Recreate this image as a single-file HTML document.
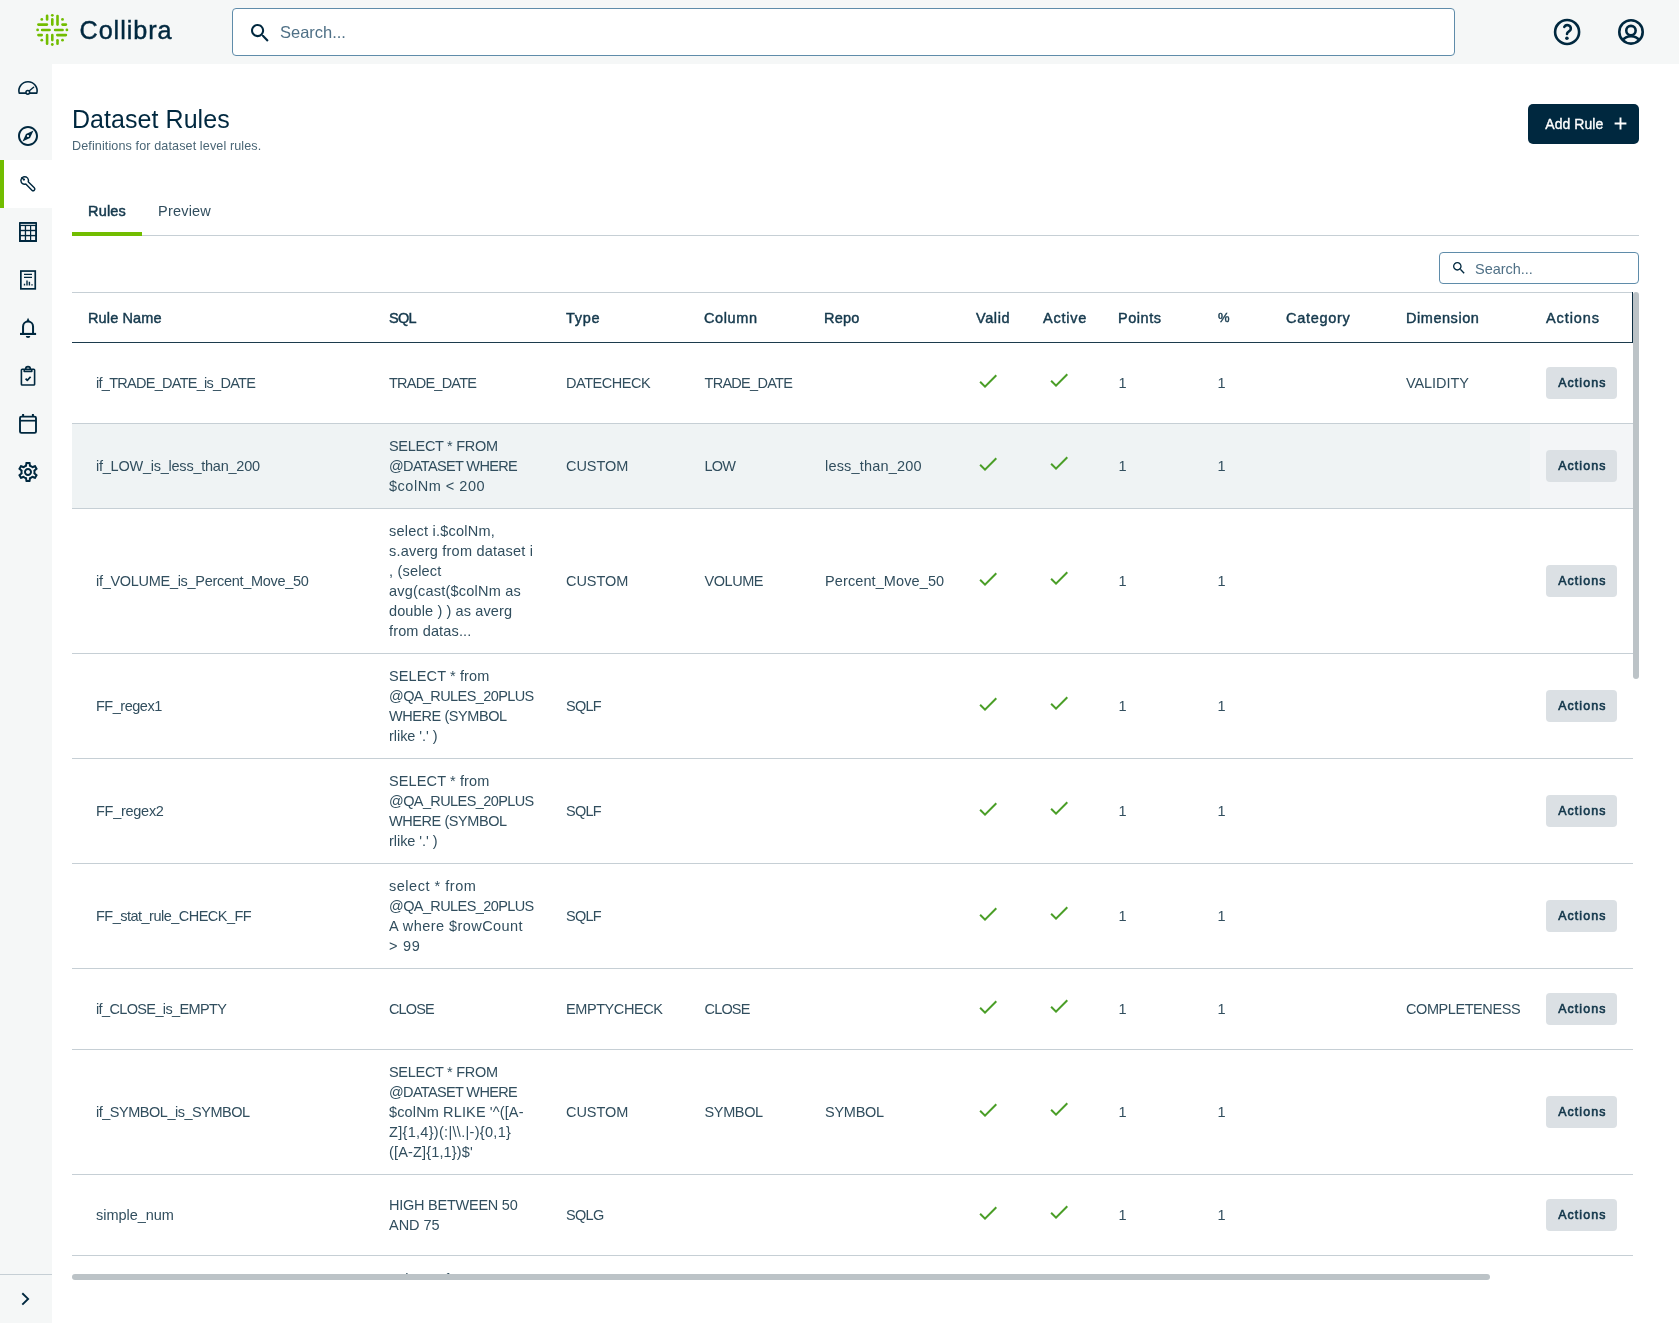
<!DOCTYPE html>
<html><head><meta charset="utf-8"><title>Dataset Rules</title>
<style>
html,body{margin:0;padding:0}
body{width:1679px;height:1323px;overflow:hidden;position:relative;background:#fff;font-family:"Liberation Sans",sans-serif;-webkit-font-smoothing:antialiased}
</style></head><body>
<div style="position:absolute;left:0px;top:0px;width:1679px;height:64px;background:#f5f7f7;"></div>
<div style="position:absolute;left:0px;top:64px;width:52px;height:1259px;background:#f5f7f7;"></div>
<div style="position:absolute;left:0px;top:160px;width:52px;height:48px;background:#fff;"></div>
<div style="position:absolute;left:0px;top:160px;width:4px;height:48px;background:#72bd00;"></div>
<div style="position:absolute;left:0px;top:1274px;width:52px;height:1px;background:#c6cfd5;"></div>
<svg style="position:absolute;left:32px;top:10px" width="40" height="40" viewBox="32 10 40 40" fill="none" stroke="#72bd00" stroke-width="2.6" stroke-linecap="round"><path d="M47.1 15.8L47.1 19.4"/><circle cx="52.3" cy="15.3" r="1.4" stroke="none" fill="#72bd00"/><path d="M52.3 19.3L52.3 24.6"/><path d="M57.5 16.1L57.5 24.6"/><path d="M47.1 35.0L47.1 43.8"/><path d="M52.3 35.0L52.3 40.1"/><circle cx="52.3" cy="44.5" r="1.4" stroke="none" fill="#72bd00"/><path d="M57.5 40.2L57.5 43.8"/><path d="M38.4 24.6L46.9 24.6"/><path d="M62.5 24.6L65.9 24.6"/><circle cx="37.6" cy="29.95" r="1.4" stroke="none" fill="#72bd00"/><path d="M42.1 29.95L49.6 29.95"/><path d="M55.1 29.95L62.6 29.95"/><circle cx="66.9" cy="29.95" r="1.4" stroke="none" fill="#72bd00"/><path d="M38.4 35.1L41.7 35.1"/><path d="M57.3 35.1L65.9 35.1"/><circle cx="41.8" cy="19.4" r="1.4" stroke="none" fill="#72bd00"/><circle cx="62.5" cy="19.4" r="1.4" stroke="none" fill="#72bd00"/><circle cx="41.8" cy="40.2" r="1.4" stroke="none" fill="#72bd00"/><circle cx="62.5" cy="40.2" r="1.4" stroke="none" fill="#72bd00"/></svg>
<div style="position:absolute;left:232px;top:8px;width:1221px;height:46px;background:#fff;border:1px solid #5f8caa;border-radius:4px"></div>
<svg style="position:absolute;left:248.2px;top:20.7px" width="24.2" height="24.2" viewBox="0 0 24 24" fill="#00283f" ><path d="M15.5 14h-.79l-.28-.27C15.41 12.59 16 11.11 16 9.5 16 5.91 13.09 3 9.5 3S3 5.91 3 9.5 5.91 16 9.5 16c1.61 0 3.09-.59 4.23-1.57l.27.28v.79l5 4.99L20.49 19l-4.99-5zm-6 0C7.01 14 5 11.99 5 9.5S7.01 5 9.5 5 14 7.01 14 9.5 11.99 14 9.5 14z"/></svg>
<svg style="position:absolute;left:1551px;top:16px" width="32" height="32" viewBox="1551 16 32 32" fill="none" stroke="#00283f" stroke-width="2.6" stroke-linecap="round" stroke-linejoin="round"><circle cx="1567.1" cy="31.95" r="12"/><path d="M1564.3 26.9A3.5 3.5 0 0 1 1570.8 28.9C1570.8 31.4 1567 31.2 1567 33.9" stroke-width="2.6"/><circle cx="1566.9" cy="38.25" r="1.8" fill="#00283f" stroke="none"/></svg>
<svg style="position:absolute;left:1615px;top:16px" width="32" height="32" viewBox="1615 16 32 32" fill="none" stroke="#00283f" stroke-width="2.6"><circle cx="1631" cy="31.9" r="11.7"/><circle cx="1630.95" cy="30.6" r="4.7"/><path d="M1622.2 40.6C1624.4 37.7 1627.4 36.3 1631 36.3S1637.6 37.7 1639.8 40.6" stroke-width="2.5"/></svg>
<svg style="position:absolute;left:16px;top:76px" width="24" height="24" viewBox="16 76 24 24" fill="none" stroke="#00283f" stroke-width="1.6" stroke-linejoin="round"><path d="M19.2 93.1A9.1 9.1 0 1 1 36.8 93.1Z"/><path d="M28.8 91.2L33.6 87.2" stroke-linecap="round" stroke-width="1.45"/><circle cx="27.8" cy="92.3" r="1.85" stroke-width="1.5" fill="#f5f7f7"/></svg>
<svg style="position:absolute;left:16px;top:124px" width="24" height="24" viewBox="0 0 24 24" fill="#00283f" ><path d="M12 2C6.48 2 2 6.48 2 12s4.48 10 10 10 10-4.48 10-10S17.52 2 12 2zm0 18c-4.41 0-8-3.590-8-8s3.590-8 8-8 8 3.590 8 8-3.590 8-8 8zm-5.500-2.500l7.510-3.490L17.500 6.500 9.990 9.990 6.500 17.500zm5.500-6.600c.610 0 1.100.490 1.100 1.100s-.490 1.100-1.100 1.100-1.100-.490-1.100-1.100.490-1.100 1.100-1.100z"/></svg>
<svg style="position:absolute;left:16px;top:172px" width="24" height="24" viewBox="16 172 24 24" fill="none" stroke-linecap="round"><circle cx="24.7" cy="180.6" r="4.5" fill="#00283f"/><path d="M25.5 181.4L33.1 189.0" stroke="#00283f" stroke-width="4.8"/><circle cx="24.7" cy="180.6" r="3" fill="#fff"/><path d="M25.5 181.4L33.1 189.0" stroke="#fff" stroke-width="1.9"/><circle cx="23.9" cy="179.6" r="1.15" fill="#00283f"/><path d="M21.8 177.7L23.6 179.4" stroke="#00283f" stroke-width="1.3"/></svg>
<svg style="position:absolute;left:16px;top:220px" width="24" height="24" viewBox="16 220 24 24"><rect x="19" y="222" width="18" height="20" rx="0.5" fill="#00283f"/><rect x="20.6" y="223.9" width="14.8" height="0.9" fill="#f5f7f7"/><rect x="20.9" y="226.1" width="3.9" height="3.7" fill="#f5f7f7"/><rect x="20.9" y="231.2" width="3.9" height="3.7" fill="#f5f7f7"/><rect x="20.9" y="236.3" width="3.9" height="3.7" fill="#f5f7f7"/><rect x="26.1" y="226.1" width="3.9" height="3.7" fill="#f5f7f7"/><rect x="26.1" y="231.2" width="3.9" height="3.7" fill="#f5f7f7"/><rect x="26.1" y="236.3" width="3.9" height="3.7" fill="#f5f7f7"/><rect x="31.2" y="226.1" width="3.9" height="3.7" fill="#f5f7f7"/><rect x="31.2" y="231.2" width="3.9" height="3.7" fill="#f5f7f7"/><rect x="31.2" y="236.3" width="3.9" height="3.7" fill="#f5f7f7"/></svg>
<svg style="position:absolute;left:16px;top:268px" width="24" height="24" viewBox="16 268 24 24" fill="none" stroke="#00283f"><rect x="20.85" y="271.05" width="14.4" height="17.8" stroke-width="1.7"/><path d="M24 274.4H32M24 277.4H32" stroke-width="1.3"/><path d="M24.5 283.8V285.6M27 280.5V285.6M29.4 281.8V285.6M32 284.3V285.6" stroke-width="1.4"/></svg>
<svg style="position:absolute;left:16px;top:316px" width="24" height="24" viewBox="16 316 24 24" fill="none" stroke="#00283f" stroke-width="2"><path d="M23.05 333.9V326.6A5 5 0 0 1 33.05 326.6V333.9"/><path d="M20 333.95H36.1" stroke-width="2.1"/><path d="M26.5 320.9L28.05 317.7L29.6 320.9Z" fill="#00283f" stroke="none"/><path d="M25.8 336H30.3A2.25 2.1 0 0 1 25.8 336Z" fill="#00283f" stroke="none"/></svg>
<svg style="position:absolute;left:16px;top:364px" width="24" height="24" viewBox="16 364 24 24" fill="none" stroke="#00283f" stroke-width="1.6" stroke-linejoin="round"><rect x="21.4" y="369.2" width="13.2" height="15.8" rx="0.8"/><path d="M24.2 369.3V371.4H31.8V369.3"/><path d="M25.6 369.2A2.4 2.6 0 0 1 30.4 369.2" /><path d="M25.6 378.7L27.3 380.4L30.6 376.7" stroke-width="1.7"/></svg>
<svg style="position:absolute;left:16px;top:412px" width="24" height="24" viewBox="16 412 24 24" fill="none" stroke="#00283f" stroke-width="1.9"><rect x="20" y="416.6" width="16" height="16.3" rx="1.4"/><path d="M20 420.7H36" stroke-width="1.7"/><path d="M23.1 414V417M32.9 414V417" stroke-width="2"/></svg>
<svg style="position:absolute;left:16px;top:460px" width="24" height="24" viewBox="0 0 24 24" fill="#00283f" ><path d="M19.43 12.98c.04-.32.07-.64.07-.98 0-.34-.03-.66-.07-.98l2.11-1.65c.19-.15.24-.42.12-.64l-2-3.46c-.09-.16-.26-.25-.44-.25-.06 0-.12.01-.17.03l-2.49 1c-.52-.4-1.08-.73-1.69-.98l-.38-2.65C14.46 2.18 14.25 2 14 2h-4c-.25 0-.46.18-.49.42l-.38 2.65c-.61.25-1.17.59-1.69.98l-2.49-1c-.06-.02-.12-.03-.18-.03-.17 0-.34.09-.43.25l-2 3.46c-.13.22-.07.49.12.64l2.11 1.65c-.04.32-.07.65-.07.98 0 .33.03.66.07.98l-2.11 1.65c-.19.15-.24.42-.12.64l2 3.46c.09.16.26.25.44.25.06 0 .12-.01.17-.03l2.49-1c.52.4 1.08.73 1.69.98l.38 2.65c.03.24.24.42.49.42h4c.25 0 .46-.18.49-.42l.38-2.65c.61-.25 1.17-.59 1.69-.98l2.49 1c.06.02.12.03.18.03.17 0 .34-.09.43-.25l2-3.46c.12-.22.07-.49-.12-.64l-2.11-1.65zm-1.98-1.71c.04.31.05.52.05.73 0 .21-.02.43-.05.73l-.14 1.13.89.7 1.08.84-.7 1.21-1.27-.51-1.04-.42-.9.68c-.43.32-.84.56-1.25.73l-1.06.43-.16 1.13-.2 1.35h-1.4l-.19-1.35-.16-1.13-1.06-.43c-.43-.18-.83-.41-1.23-.71l-.91-.7-1.06.43-1.27.51-.7-1.21 1.08-.84.89-.7-.14-1.13c-.03-.31-.05-.54-.05-.74s.02-.43.05-.73l.14-1.13-.89-.7-1.08-.84.7-1.21 1.27.51 1.04.42.9-.68c.43-.32.84-.56 1.25-.73l1.06-.43.16-1.13.2-1.35h1.39l.19 1.35.16 1.13 1.06.43c.43.18.83.41 1.23.71l.91.7 1.06-.43 1.27-.51.7 1.21-1.07.85-.89.7.14 1.13zM12 8c-2.21 0-4 1.79-4 4s1.79 4 4 4 4-1.79 4-4-1.79-4-4-4zm0 6c-1.1 0-2-.9-2-2s.9-2 2-2 2 .9 2 2-.9 2-2 2z"/></svg>
<svg style="position:absolute;left:13px;top:1287px" width="24" height="24" viewBox="13 1287 24 24" fill="none" stroke="#00283f" stroke-width="1.9"><path d="M22.3 1293.2L28.1 1298.9L22.3 1304.6"/></svg>
<div style="position:absolute;left:1528px;top:104px;width:111px;height:40px;background:#00283f;border-radius:5px"></div>
<svg style="position:absolute;left:1613.1px;top:116.0px" width="15" height="15" viewBox="0 0 15 15" stroke="#fff" stroke-width="1.9" fill="none"><path d="M7.5 1.6V13.4M1.6 7.5H13.4"/></svg>
<div style="position:absolute;left:72px;top:235px;width:1567px;height:1px;background:#c6cfd5;"></div>
<div style="position:absolute;left:72px;top:232px;width:70px;height:4px;background:#72bd00;"></div>
<div style="position:absolute;left:1439px;top:252px;width:198px;height:30px;background:#fff;border:1px solid #5f8caa;border-radius:4px"></div>
<svg style="position:absolute;left:1451px;top:260.3px" width="16" height="16" viewBox="0 0 24 24" fill="#00283f" ><path d="M15.5 14h-.79l-.28-.27C15.41 12.59 16 11.11 16 9.5 16 5.91 13.09 3 9.5 3S3 5.91 3 9.5 5.91 16 9.5 16c1.61 0 3.09-.59 4.23-1.57l.27.28v.79l5 4.99L20.49 19l-4.99-5zm-6 0C7.01 14 5 11.99 5 9.5S7.01 5 9.5 5 14 7.01 14 9.5 11.99 14 9.5 14z"/></svg>
<div style="position:absolute;left:72px;top:292px;width:1561px;height:1px;background:#c6cfd5;"></div>
<div style="position:absolute;left:72px;top:342px;width:1561px;height:1px;background:#1c3b4d;"></div>
<div style="position:absolute;left:1632px;top:292px;width:1px;height:51px;background:#0b2d42;"></div>
<div style="position:absolute;left:72px;top:423px;width:1561px;height:1px;background:#c6cfd5;"></div>
<div style="position:absolute;left:1546px;top:367.0px;width:71px;height:32px;background:#dbe0e4;border-radius:4px"></div>
<svg style="position:absolute;left:975.6px;top:369.0px" width="24" height="24" viewBox="0 0 24 24" fill="#4a9e27" ><path d="M9 16.17L4.83 12l-1.42 1.41L9 19 21 7l-1.41-1.410z"/></svg>
<svg style="position:absolute;left:1046.8px;top:368.0px" width="24" height="24" viewBox="0 0 24 24" fill="#4a9e27" ><path d="M9 16.17L4.83 12l-1.42 1.41L9 19 21 7l-1.41-1.410z"/></svg>
<div style="position:absolute;left:72px;top:424px;width:1458px;height:84px;background:#eff3f4;"></div>
<div style="position:absolute;left:1530px;top:424px;width:103px;height:84px;background:#f3f5f7;"></div>
<div style="position:absolute;left:72px;top:508px;width:1561px;height:1px;background:#c6cfd5;"></div>
<div style="position:absolute;left:1546px;top:450.0px;width:71px;height:32px;background:#dbe0e4;border-radius:4px"></div>
<svg style="position:absolute;left:975.6px;top:452.0px" width="24" height="24" viewBox="0 0 24 24" fill="#4a9e27" ><path d="M9 16.17L4.83 12l-1.42 1.41L9 19 21 7l-1.41-1.410z"/></svg>
<svg style="position:absolute;left:1046.8px;top:451.0px" width="24" height="24" viewBox="0 0 24 24" fill="#4a9e27" ><path d="M9 16.17L4.83 12l-1.42 1.41L9 19 21 7l-1.41-1.410z"/></svg>
<div style="position:absolute;left:72px;top:653px;width:1561px;height:1px;background:#c6cfd5;"></div>
<div style="position:absolute;left:1546px;top:565.0px;width:71px;height:32px;background:#dbe0e4;border-radius:4px"></div>
<svg style="position:absolute;left:975.6px;top:567.0px" width="24" height="24" viewBox="0 0 24 24" fill="#4a9e27" ><path d="M9 16.17L4.83 12l-1.42 1.41L9 19 21 7l-1.41-1.410z"/></svg>
<svg style="position:absolute;left:1046.8px;top:566.0px" width="24" height="24" viewBox="0 0 24 24" fill="#4a9e27" ><path d="M9 16.17L4.83 12l-1.42 1.41L9 19 21 7l-1.41-1.410z"/></svg>
<div style="position:absolute;left:72px;top:758px;width:1561px;height:1px;background:#c6cfd5;"></div>
<div style="position:absolute;left:1546px;top:690.0px;width:71px;height:32px;background:#dbe0e4;border-radius:4px"></div>
<svg style="position:absolute;left:975.6px;top:692.0px" width="24" height="24" viewBox="0 0 24 24" fill="#4a9e27" ><path d="M9 16.17L4.83 12l-1.42 1.41L9 19 21 7l-1.41-1.410z"/></svg>
<svg style="position:absolute;left:1046.8px;top:691.0px" width="24" height="24" viewBox="0 0 24 24" fill="#4a9e27" ><path d="M9 16.17L4.83 12l-1.42 1.41L9 19 21 7l-1.41-1.410z"/></svg>
<div style="position:absolute;left:72px;top:863px;width:1561px;height:1px;background:#c6cfd5;"></div>
<div style="position:absolute;left:1546px;top:795.0px;width:71px;height:32px;background:#dbe0e4;border-radius:4px"></div>
<svg style="position:absolute;left:975.6px;top:797.0px" width="24" height="24" viewBox="0 0 24 24" fill="#4a9e27" ><path d="M9 16.17L4.83 12l-1.42 1.41L9 19 21 7l-1.41-1.410z"/></svg>
<svg style="position:absolute;left:1046.8px;top:796.0px" width="24" height="24" viewBox="0 0 24 24" fill="#4a9e27" ><path d="M9 16.17L4.83 12l-1.42 1.41L9 19 21 7l-1.41-1.410z"/></svg>
<div style="position:absolute;left:72px;top:968px;width:1561px;height:1px;background:#c6cfd5;"></div>
<div style="position:absolute;left:1546px;top:900.0px;width:71px;height:32px;background:#dbe0e4;border-radius:4px"></div>
<svg style="position:absolute;left:975.6px;top:902.0px" width="24" height="24" viewBox="0 0 24 24" fill="#4a9e27" ><path d="M9 16.17L4.83 12l-1.42 1.41L9 19 21 7l-1.41-1.410z"/></svg>
<svg style="position:absolute;left:1046.8px;top:901.0px" width="24" height="24" viewBox="0 0 24 24" fill="#4a9e27" ><path d="M9 16.17L4.83 12l-1.42 1.41L9 19 21 7l-1.41-1.410z"/></svg>
<div style="position:absolute;left:72px;top:1049px;width:1561px;height:1px;background:#c6cfd5;"></div>
<div style="position:absolute;left:1546px;top:993.0px;width:71px;height:32px;background:#dbe0e4;border-radius:4px"></div>
<svg style="position:absolute;left:975.6px;top:995.0px" width="24" height="24" viewBox="0 0 24 24" fill="#4a9e27" ><path d="M9 16.17L4.83 12l-1.42 1.41L9 19 21 7l-1.41-1.410z"/></svg>
<svg style="position:absolute;left:1046.8px;top:994.0px" width="24" height="24" viewBox="0 0 24 24" fill="#4a9e27" ><path d="M9 16.17L4.83 12l-1.42 1.41L9 19 21 7l-1.41-1.410z"/></svg>
<div style="position:absolute;left:72px;top:1174px;width:1561px;height:1px;background:#c6cfd5;"></div>
<div style="position:absolute;left:1546px;top:1096.0px;width:71px;height:32px;background:#dbe0e4;border-radius:4px"></div>
<svg style="position:absolute;left:975.6px;top:1098.0px" width="24" height="24" viewBox="0 0 24 24" fill="#4a9e27" ><path d="M9 16.17L4.83 12l-1.42 1.41L9 19 21 7l-1.41-1.410z"/></svg>
<svg style="position:absolute;left:1046.8px;top:1097.0px" width="24" height="24" viewBox="0 0 24 24" fill="#4a9e27" ><path d="M9 16.17L4.83 12l-1.42 1.41L9 19 21 7l-1.41-1.410z"/></svg>
<div style="position:absolute;left:72px;top:1255px;width:1561px;height:1px;background:#c6cfd5;"></div>
<div style="position:absolute;left:1546px;top:1199.0px;width:71px;height:32px;background:#dbe0e4;border-radius:4px"></div>
<svg style="position:absolute;left:975.6px;top:1201.0px" width="24" height="24" viewBox="0 0 24 24" fill="#4a9e27" ><path d="M9 16.17L4.83 12l-1.42 1.41L9 19 21 7l-1.41-1.410z"/></svg>
<svg style="position:absolute;left:1046.8px;top:1200.0px" width="24" height="24" viewBox="0 0 24 24" fill="#4a9e27" ><path d="M9 16.17L4.83 12l-1.42 1.41L9 19 21 7l-1.41-1.410z"/></svg>
<div style="position:absolute;left:72px;top:1340.2px;width:1561px;height:1px;background:#c6cfd5;"></div>
<div style="position:absolute;left:1546px;top:1282.6px;width:71px;height:32px;background:#dbe0e4;border-radius:4px"></div>
<svg style="position:absolute;left:975.6px;top:1284.6px" width="24" height="24" viewBox="0 0 24 24" fill="#4a9e27" ><path d="M9 16.17L4.83 12l-1.42 1.41L9 19 21 7l-1.41-1.410z"/></svg>
<svg style="position:absolute;left:1046.8px;top:1283.6px" width="24" height="24" viewBox="0 0 24 24" fill="#4a9e27" ><path d="M9 16.17L4.83 12l-1.42 1.41L9 19 21 7l-1.41-1.410z"/></svg>
<div style="position:absolute;left:0;top:0;width:1679px;height:1323px;will-change:transform"><span style="position:absolute;left:79.5px;top:14px;font-size:25.2px;font-weight:400;color:#00283f;line-height:32px;white-space:pre;-webkit-text-stroke:0.45px #00283f;letter-spacing:0.951px;">Collibra</span>
<span style="position:absolute;left:280px;top:22.4px;font-size:16.5px;font-weight:400;color:#4f7086;line-height:20px;white-space:pre;letter-spacing:-0.025px;">Search...</span>
<span style="position:absolute;left:72px;top:103.4px;font-size:25px;font-weight:400;color:#00283f;line-height:32px;white-space:pre;letter-spacing:0.052px;">Dataset Rules</span>
<span style="position:absolute;left:72px;top:137px;font-size:12.6px;font-weight:400;color:#4a6676;line-height:18px;white-space:pre;letter-spacing:0.107px;">Definitions for dataset level rules.</span>
<span style="position:absolute;left:88px;top:201px;font-size:14.5px;font-weight:400;color:#15394d;line-height:20px;white-space:pre;-webkit-text-stroke:0.5px #15394d;letter-spacing:0.193px;">Rules</span>
<span style="position:absolute;left:158px;top:201px;font-size:14.5px;font-weight:400;color:#314e5e;line-height:20px;white-space:pre;letter-spacing:0.212px;">Preview</span>
<span style="position:absolute;left:1545.3px;top:114px;font-size:14px;font-weight:400;color:#ffffff;line-height:20px;white-space:pre;-webkit-text-stroke:0.35px #fff;letter-spacing:0.051px;">Add Rule</span>
<span style="position:absolute;left:1475px;top:259px;font-size:14.5px;font-weight:400;color:#4f7086;line-height:20px;white-space:pre;letter-spacing:-0.035px;">Search...</span>
<span style="position:absolute;left:88px;top:308px;font-size:14.5px;font-weight:400;color:#15394d;line-height:20px;white-space:pre;-webkit-text-stroke:0.45px #15394d;letter-spacing:0.127px;">Rule Name</span>
<span style="position:absolute;left:389px;top:308px;font-size:14.5px;font-weight:400;color:#15394d;line-height:20px;white-space:pre;-webkit-text-stroke:0.45px #15394d;letter-spacing:-0.783px;">SQL</span>
<span style="position:absolute;left:566px;top:308px;font-size:14.5px;font-weight:400;color:#15394d;line-height:20px;white-space:pre;-webkit-text-stroke:0.45px #15394d;letter-spacing:0.704px;">Type</span>
<span style="position:absolute;left:704px;top:308px;font-size:14.5px;font-weight:400;color:#15394d;line-height:20px;white-space:pre;-webkit-text-stroke:0.45px #15394d;letter-spacing:0.596px;">Column</span>
<span style="position:absolute;left:824px;top:308px;font-size:14.5px;font-weight:400;color:#15394d;line-height:20px;white-space:pre;-webkit-text-stroke:0.45px #15394d;letter-spacing:0.193px;">Repo</span>
<span style="position:absolute;left:976px;top:308px;font-size:14.5px;font-weight:400;color:#15394d;line-height:20px;white-space:pre;-webkit-text-stroke:0.45px #15394d;letter-spacing:0.595px;">Valid</span>
<span style="position:absolute;left:1043px;top:308px;font-size:14.5px;font-weight:400;color:#15394d;line-height:20px;white-space:pre;-webkit-text-stroke:0.45px #15394d;letter-spacing:0.750px;">Active</span>
<span style="position:absolute;left:1118px;top:308px;font-size:14.5px;font-weight:400;color:#15394d;line-height:20px;white-space:pre;-webkit-text-stroke:0.45px #15394d;letter-spacing:0.528px;">Points</span>
<span style="position:absolute;left:1218px;top:308px;font-size:13px;font-weight:400;color:#15394d;line-height:20px;white-space:pre;-webkit-text-stroke:0.45px #15394d;">%</span>
<span style="position:absolute;left:1286px;top:308px;font-size:14.5px;font-weight:400;color:#15394d;line-height:20px;white-space:pre;-webkit-text-stroke:0.45px #15394d;letter-spacing:0.701px;">Category</span>
<span style="position:absolute;left:1406px;top:308px;font-size:14.5px;font-weight:400;color:#15394d;line-height:20px;white-space:pre;-webkit-text-stroke:0.45px #15394d;letter-spacing:0.544px;">Dimension</span>
<span style="position:absolute;left:1546px;top:308px;font-size:14.5px;font-weight:400;color:#15394d;line-height:20px;white-space:pre;-webkit-text-stroke:0.45px #15394d;letter-spacing:0.898px;">Actions</span>
<span style="position:absolute;left:96px;top:373.0px;font-size:14.5px;font-weight:400;color:#314e5e;line-height:20px;white-space:pre;letter-spacing:-0.723px;">if_TRADE_DATE_is_DATE</span>
<span style="position:absolute;left:389px;top:373.0px;font-size:14.5px;font-weight:400;color:#314e5e;line-height:20px;white-space:pre;letter-spacing:-0.763px;">TRADE_DATE</span>
<span style="position:absolute;left:566px;top:373.0px;font-size:14.5px;font-weight:400;color:#314e5e;line-height:20px;white-space:pre;letter-spacing:-0.451px;">DATECHECK</span>
<span style="position:absolute;left:704.5px;top:373.0px;font-size:14.5px;font-weight:400;color:#314e5e;line-height:20px;white-space:pre;letter-spacing:-0.718px;">TRADE_DATE</span>
<span style="position:absolute;left:1406px;top:373.0px;font-size:14.5px;font-weight:400;color:#314e5e;line-height:20px;white-space:pre;letter-spacing:-0.077px;">VALIDITY</span>
<span style="position:absolute;left:1118.6px;top:373.0px;font-size:14.5px;font-weight:400;color:#314e5e;line-height:20px;white-space:pre;">1</span>
<span style="position:absolute;left:1217.6px;top:373.0px;font-size:14.5px;font-weight:400;color:#314e5e;line-height:20px;white-space:pre;">1</span>
<span style="position:absolute;left:1558.2px;top:373.0px;font-size:12.4px;font-weight:400;color:#12364a;line-height:20px;white-space:pre;-webkit-text-stroke:0.6px #12364a;letter-spacing:1.085px;">Actions</span>
<span style="position:absolute;left:96px;top:456.0px;font-size:14.5px;font-weight:400;color:#314e5e;line-height:20px;white-space:pre;letter-spacing:-0.238px;">if_LOW_is_less_than_200</span>
<span style="position:absolute;left:389px;top:436.0px;font-size:14.5px;font-weight:400;color:#314e5e;line-height:20px;white-space:pre;letter-spacing:-0.298px;">SELECT * FROM</span>
<span style="position:absolute;left:389px;top:456.0px;font-size:14.5px;font-weight:400;color:#314e5e;line-height:20px;white-space:pre;letter-spacing:-0.649px;">@DATASET WHERE</span>
<span style="position:absolute;left:389px;top:476.0px;font-size:14.5px;font-weight:400;color:#314e5e;line-height:20px;white-space:pre;letter-spacing:0.516px;">$colNm &lt; 200</span>
<span style="position:absolute;left:566px;top:456.0px;font-size:14.5px;font-weight:400;color:#314e5e;line-height:20px;white-space:pre;letter-spacing:-0.066px;">CUSTOM</span>
<span style="position:absolute;left:704.5px;top:456.0px;font-size:14.5px;font-weight:400;color:#314e5e;line-height:20px;white-space:pre;letter-spacing:-0.791px;">LOW</span>
<span style="position:absolute;left:825px;top:456.0px;font-size:14.5px;font-weight:400;color:#314e5e;line-height:20px;white-space:pre;letter-spacing:0.185px;">less_than_200</span>
<span style="position:absolute;left:1118.6px;top:456.0px;font-size:14.5px;font-weight:400;color:#314e5e;line-height:20px;white-space:pre;">1</span>
<span style="position:absolute;left:1217.6px;top:456.0px;font-size:14.5px;font-weight:400;color:#314e5e;line-height:20px;white-space:pre;">1</span>
<span style="position:absolute;left:1558.2px;top:456.0px;font-size:12.4px;font-weight:400;color:#12364a;line-height:20px;white-space:pre;-webkit-text-stroke:0.6px #12364a;letter-spacing:1.085px;">Actions</span>
<span style="position:absolute;left:96px;top:571.0px;font-size:14.5px;font-weight:400;color:#314e5e;line-height:20px;white-space:pre;letter-spacing:-0.296px;">if_VOLUME_is_Percent_Move_50</span>
<span style="position:absolute;left:389px;top:521.0px;font-size:14.5px;font-weight:400;color:#314e5e;line-height:20px;white-space:pre;letter-spacing:0.234px;">select i.$colNm,</span>
<span style="position:absolute;left:389px;top:541.0px;font-size:14.5px;font-weight:400;color:#314e5e;line-height:20px;white-space:pre;letter-spacing:0.216px;">s.averg from dataset i</span>
<span style="position:absolute;left:389px;top:561.0px;font-size:14.5px;font-weight:400;color:#314e5e;line-height:20px;white-space:pre;letter-spacing:0.186px;">, (select</span>
<span style="position:absolute;left:389px;top:581.0px;font-size:14.5px;font-weight:400;color:#314e5e;line-height:20px;white-space:pre;letter-spacing:0.213px;">avg(cast($colNm as</span>
<span style="position:absolute;left:389px;top:601.0px;font-size:14.5px;font-weight:400;color:#314e5e;line-height:20px;white-space:pre;letter-spacing:0.119px;">double ) ) as averg</span>
<span style="position:absolute;left:389px;top:621.0px;font-size:14.5px;font-weight:400;color:#314e5e;line-height:20px;white-space:pre;letter-spacing:0.138px;">from datas...</span>
<span style="position:absolute;left:566px;top:571.0px;font-size:14.5px;font-weight:400;color:#314e5e;line-height:20px;white-space:pre;letter-spacing:-0.066px;">CUSTOM</span>
<span style="position:absolute;left:704.5px;top:571.0px;font-size:14.5px;font-weight:400;color:#314e5e;line-height:20px;white-space:pre;letter-spacing:-0.460px;">VOLUME</span>
<span style="position:absolute;left:825px;top:571.0px;font-size:14.5px;font-weight:400;color:#314e5e;line-height:20px;white-space:pre;letter-spacing:0.104px;">Percent_Move_50</span>
<span style="position:absolute;left:1118.6px;top:571.0px;font-size:14.5px;font-weight:400;color:#314e5e;line-height:20px;white-space:pre;">1</span>
<span style="position:absolute;left:1217.6px;top:571.0px;font-size:14.5px;font-weight:400;color:#314e5e;line-height:20px;white-space:pre;">1</span>
<span style="position:absolute;left:1558.2px;top:571.0px;font-size:12.4px;font-weight:400;color:#12364a;line-height:20px;white-space:pre;-webkit-text-stroke:0.6px #12364a;letter-spacing:1.085px;">Actions</span>
<span style="position:absolute;left:96px;top:696.0px;font-size:14.5px;font-weight:400;color:#314e5e;line-height:20px;white-space:pre;letter-spacing:-0.484px;">FF_regex1</span>
<span style="position:absolute;left:389px;top:666.0px;font-size:14.5px;font-weight:400;color:#314e5e;line-height:20px;white-space:pre;letter-spacing:0.116px;">SELECT * from</span>
<span style="position:absolute;left:389px;top:686.0px;font-size:14.5px;font-weight:400;color:#314e5e;line-height:20px;white-space:pre;letter-spacing:-0.594px;">@QA_RULES_20PLUS</span>
<span style="position:absolute;left:389px;top:706.0px;font-size:14.5px;font-weight:400;color:#314e5e;line-height:20px;white-space:pre;letter-spacing:-0.435px;">WHERE (SYMBOL</span>
<span style="position:absolute;left:389px;top:726.0px;font-size:14.5px;font-weight:400;color:#314e5e;line-height:20px;white-space:pre;letter-spacing:-0.040px;">rlike &#x27;.&#x27; )</span>
<span style="position:absolute;left:566px;top:696.0px;font-size:14.5px;font-weight:400;color:#314e5e;line-height:20px;white-space:pre;letter-spacing:-0.742px;">SQLF</span>
<span style="position:absolute;left:1118.6px;top:696.0px;font-size:14.5px;font-weight:400;color:#314e5e;line-height:20px;white-space:pre;">1</span>
<span style="position:absolute;left:1217.6px;top:696.0px;font-size:14.5px;font-weight:400;color:#314e5e;line-height:20px;white-space:pre;">1</span>
<span style="position:absolute;left:1558.2px;top:696.0px;font-size:12.4px;font-weight:400;color:#12364a;line-height:20px;white-space:pre;-webkit-text-stroke:0.6px #12364a;letter-spacing:1.085px;">Actions</span>
<span style="position:absolute;left:96px;top:801.0px;font-size:14.5px;font-weight:400;color:#314e5e;line-height:20px;white-space:pre;letter-spacing:-0.272px;">FF_regex2</span>
<span style="position:absolute;left:389px;top:771.0px;font-size:14.5px;font-weight:400;color:#314e5e;line-height:20px;white-space:pre;letter-spacing:0.116px;">SELECT * from</span>
<span style="position:absolute;left:389px;top:791.0px;font-size:14.5px;font-weight:400;color:#314e5e;line-height:20px;white-space:pre;letter-spacing:-0.594px;">@QA_RULES_20PLUS</span>
<span style="position:absolute;left:389px;top:811.0px;font-size:14.5px;font-weight:400;color:#314e5e;line-height:20px;white-space:pre;letter-spacing:-0.435px;">WHERE (SYMBOL</span>
<span style="position:absolute;left:389px;top:831.0px;font-size:14.5px;font-weight:400;color:#314e5e;line-height:20px;white-space:pre;letter-spacing:-0.040px;">rlike &#x27;.&#x27; )</span>
<span style="position:absolute;left:566px;top:801.0px;font-size:14.5px;font-weight:400;color:#314e5e;line-height:20px;white-space:pre;letter-spacing:-0.742px;">SQLF</span>
<span style="position:absolute;left:1118.6px;top:801.0px;font-size:14.5px;font-weight:400;color:#314e5e;line-height:20px;white-space:pre;">1</span>
<span style="position:absolute;left:1217.6px;top:801.0px;font-size:14.5px;font-weight:400;color:#314e5e;line-height:20px;white-space:pre;">1</span>
<span style="position:absolute;left:1558.2px;top:801.0px;font-size:12.4px;font-weight:400;color:#12364a;line-height:20px;white-space:pre;-webkit-text-stroke:0.6px #12364a;letter-spacing:1.085px;">Actions</span>
<span style="position:absolute;left:96px;top:906.0px;font-size:14.5px;font-weight:400;color:#314e5e;line-height:20px;white-space:pre;letter-spacing:-0.517px;">FF_stat_rule_CHECK_FF</span>
<span style="position:absolute;left:389px;top:876.0px;font-size:14.5px;font-weight:400;color:#314e5e;line-height:20px;white-space:pre;letter-spacing:0.521px;">select * from</span>
<span style="position:absolute;left:389px;top:896.0px;font-size:14.5px;font-weight:400;color:#314e5e;line-height:20px;white-space:pre;letter-spacing:-0.594px;">@QA_RULES_20PLUS</span>
<span style="position:absolute;left:389px;top:916.0px;font-size:14.5px;font-weight:400;color:#314e5e;line-height:20px;white-space:pre;letter-spacing:0.444px;">A where $rowCount</span>
<span style="position:absolute;left:389px;top:936.0px;font-size:14.5px;font-weight:400;color:#314e5e;line-height:20px;white-space:pre;letter-spacing:0.708px;">&gt; 99</span>
<span style="position:absolute;left:566px;top:906.0px;font-size:14.5px;font-weight:400;color:#314e5e;line-height:20px;white-space:pre;letter-spacing:-0.742px;">SQLF</span>
<span style="position:absolute;left:1118.6px;top:906.0px;font-size:14.5px;font-weight:400;color:#314e5e;line-height:20px;white-space:pre;">1</span>
<span style="position:absolute;left:1217.6px;top:906.0px;font-size:14.5px;font-weight:400;color:#314e5e;line-height:20px;white-space:pre;">1</span>
<span style="position:absolute;left:1558.2px;top:906.0px;font-size:12.4px;font-weight:400;color:#12364a;line-height:20px;white-space:pre;-webkit-text-stroke:0.6px #12364a;letter-spacing:1.085px;">Actions</span>
<span style="position:absolute;left:96px;top:999.0px;font-size:14.5px;font-weight:400;color:#314e5e;line-height:20px;white-space:pre;letter-spacing:-0.636px;">if_CLOSE_is_EMPTY</span>
<span style="position:absolute;left:389px;top:999.0px;font-size:14.5px;font-weight:400;color:#314e5e;line-height:20px;white-space:pre;letter-spacing:-0.880px;">CLOSE</span>
<span style="position:absolute;left:566px;top:999.0px;font-size:14.5px;font-weight:400;color:#314e5e;line-height:20px;white-space:pre;letter-spacing:-0.419px;">EMPTYCHECK</span>
<span style="position:absolute;left:704.5px;top:999.0px;font-size:14.5px;font-weight:400;color:#314e5e;line-height:20px;white-space:pre;letter-spacing:-0.830px;">CLOSE</span>
<span style="position:absolute;left:1406px;top:999.0px;font-size:14.5px;font-weight:400;color:#314e5e;line-height:20px;white-space:pre;letter-spacing:-0.427px;">COMPLETENESS</span>
<span style="position:absolute;left:1118.6px;top:999.0px;font-size:14.5px;font-weight:400;color:#314e5e;line-height:20px;white-space:pre;">1</span>
<span style="position:absolute;left:1217.6px;top:999.0px;font-size:14.5px;font-weight:400;color:#314e5e;line-height:20px;white-space:pre;">1</span>
<span style="position:absolute;left:1558.2px;top:999.0px;font-size:12.4px;font-weight:400;color:#12364a;line-height:20px;white-space:pre;-webkit-text-stroke:0.6px #12364a;letter-spacing:1.085px;">Actions</span>
<span style="position:absolute;left:96px;top:1102.0px;font-size:14.5px;font-weight:400;color:#314e5e;line-height:20px;white-space:pre;letter-spacing:-0.480px;">if_SYMBOL_is_SYMBOL</span>
<span style="position:absolute;left:389px;top:1062.0px;font-size:14.5px;font-weight:400;color:#314e5e;line-height:20px;white-space:pre;letter-spacing:-0.298px;">SELECT * FROM</span>
<span style="position:absolute;left:389px;top:1082.0px;font-size:14.5px;font-weight:400;color:#314e5e;line-height:20px;white-space:pre;letter-spacing:-0.649px;">@DATASET WHERE</span>
<span style="position:absolute;left:389px;top:1102.0px;font-size:14.5px;font-weight:400;color:#314e5e;line-height:20px;white-space:pre;letter-spacing:0.134px;">$colNm RLIKE &#x27;^([A-</span>
<span style="position:absolute;left:389px;top:1122.0px;font-size:14.5px;font-weight:400;color:#314e5e;line-height:20px;white-space:pre;letter-spacing:0.300px;">Z]{1,4})(:|\\.|-){0,1}</span>
<span style="position:absolute;left:389px;top:1142.0px;font-size:14.5px;font-weight:400;color:#314e5e;line-height:20px;white-space:pre;letter-spacing:0.154px;">([A-Z]{1,1})$&#x27;</span>
<span style="position:absolute;left:566px;top:1102.0px;font-size:14.5px;font-weight:400;color:#314e5e;line-height:20px;white-space:pre;letter-spacing:-0.066px;">CUSTOM</span>
<span style="position:absolute;left:704.5px;top:1102.0px;font-size:14.5px;font-weight:400;color:#314e5e;line-height:20px;white-space:pre;letter-spacing:-0.358px;">SYMBOL</span>
<span style="position:absolute;left:825px;top:1102.0px;font-size:14.5px;font-weight:400;color:#314e5e;line-height:20px;white-space:pre;letter-spacing:-0.258px;">SYMBOL</span>
<span style="position:absolute;left:1118.6px;top:1102.0px;font-size:14.5px;font-weight:400;color:#314e5e;line-height:20px;white-space:pre;">1</span>
<span style="position:absolute;left:1217.6px;top:1102.0px;font-size:14.5px;font-weight:400;color:#314e5e;line-height:20px;white-space:pre;">1</span>
<span style="position:absolute;left:1558.2px;top:1102.0px;font-size:12.4px;font-weight:400;color:#12364a;line-height:20px;white-space:pre;-webkit-text-stroke:0.6px #12364a;letter-spacing:1.085px;">Actions</span>
<span style="position:absolute;left:96px;top:1205.0px;font-size:14.5px;font-weight:400;color:#314e5e;line-height:20px;white-space:pre;letter-spacing:-0.036px;">simple_num</span>
<span style="position:absolute;left:389px;top:1195.0px;font-size:14.5px;font-weight:400;color:#314e5e;line-height:20px;white-space:pre;letter-spacing:-0.242px;">HIGH BETWEEN 50</span>
<span style="position:absolute;left:389px;top:1215.0px;font-size:14.5px;font-weight:400;color:#314e5e;line-height:20px;white-space:pre;letter-spacing:-0.046px;">AND 75</span>
<span style="position:absolute;left:566px;top:1205.0px;font-size:14.5px;font-weight:400;color:#314e5e;line-height:20px;white-space:pre;letter-spacing:-0.682px;">SQLG</span>
<span style="position:absolute;left:1118.6px;top:1205.0px;font-size:14.5px;font-weight:400;color:#314e5e;line-height:20px;white-space:pre;">1</span>
<span style="position:absolute;left:1217.6px;top:1205.0px;font-size:14.5px;font-weight:400;color:#314e5e;line-height:20px;white-space:pre;">1</span>
<span style="position:absolute;left:1558.2px;top:1205.0px;font-size:12.4px;font-weight:400;color:#12364a;line-height:20px;white-space:pre;-webkit-text-stroke:0.6px #12364a;letter-spacing:1.085px;">Actions</span>
<span style="position:absolute;left:96px;top:1288.6px;font-size:14.5px;font-weight:400;color:#314e5e;line-height:20px;white-space:pre;letter-spacing:-0.472px;">simple_sql</span>
<span style="position:absolute;left:389px;top:1268.6px;font-size:14.5px;font-weight:400;color:#314e5e;line-height:20px;white-space:pre;letter-spacing:0.521px;">select * from</span>
<span style="position:absolute;left:389px;top:1288.6px;font-size:14.5px;font-weight:400;color:#314e5e;line-height:20px;white-space:pre;letter-spacing:-0.594px;">@QA_RULES_20PLUS</span>
<span style="position:absolute;left:389px;top:1308.6px;font-size:14.5px;font-weight:400;color:#314e5e;line-height:20px;white-space:pre;letter-spacing:-0.085px;">where HIGH &gt; 50</span>
<span style="position:absolute;left:566px;top:1288.6px;font-size:14.5px;font-weight:400;color:#314e5e;line-height:20px;white-space:pre;letter-spacing:-0.742px;">SQLF</span>
<span style="position:absolute;left:1118.6px;top:1288.6px;font-size:14.5px;font-weight:400;color:#314e5e;line-height:20px;white-space:pre;">1</span>
<span style="position:absolute;left:1217.6px;top:1288.6px;font-size:14.5px;font-weight:400;color:#314e5e;line-height:20px;white-space:pre;">1</span>
<span style="position:absolute;left:1558.2px;top:1288.6px;font-size:12.4px;font-weight:400;color:#12364a;line-height:20px;white-space:pre;-webkit-text-stroke:0.6px #12364a;letter-spacing:1.085px;">Actions</span></div>
<div style="position:absolute;left:52px;top:1274px;width:1627px;height:49px;background:#fff;"></div>
<div style="position:absolute;left:72px;top:1274px;width:1418px;height:6px;background:#bcc3c7;border-radius:3px"></div>
<div style="position:absolute;left:1633px;top:292px;width:6px;height:387px;background:#bcc3c7;border-radius:3px"></div>
</body></html>
